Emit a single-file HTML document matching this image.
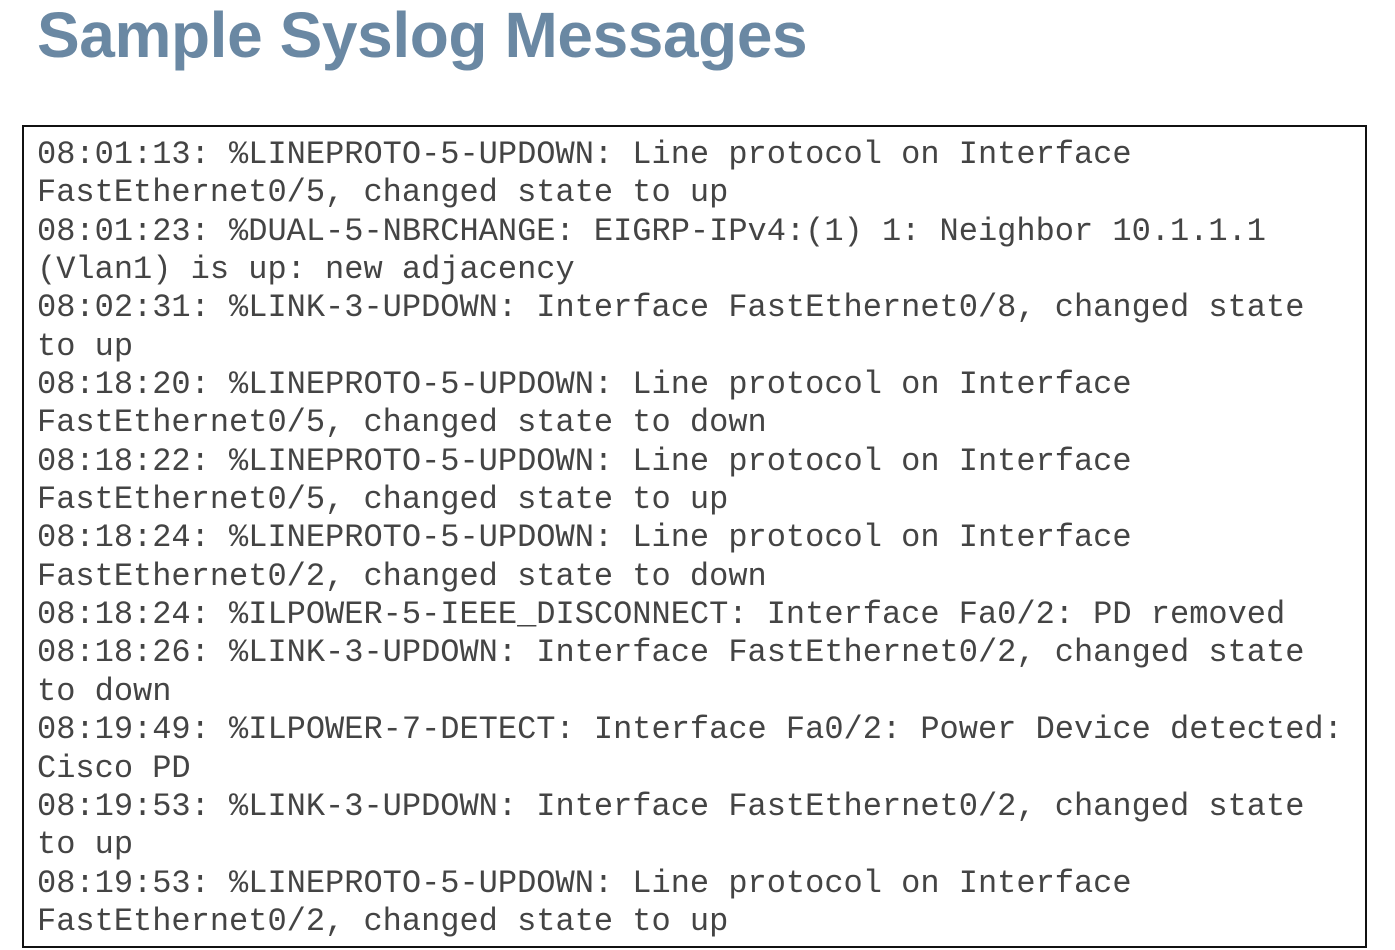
<!DOCTYPE html>
<html><head><meta charset="utf-8"><style>
html,body{margin:0;padding:0;background:#fff;width:1395px;height:950px;overflow:hidden}
h1{position:absolute;left:37px;top:-2px;margin:0;font:bold 64px "Liberation Sans",sans-serif;color:#6a88a3;letter-spacing:-0.4px;white-space:nowrap}
.box{position:absolute;left:22px;top:125px;width:1341px;height:819px;border:2.5px solid #111;}
pre{position:absolute;left:37px;top:136px;margin:0;font:32px/38.35px "Liberation Mono",monospace;color:#444;}
</style></head><body>
<h1>Sample Syslog Messages</h1>
<div class="box"></div>
<pre>08:01:13: %LINEPROTO-5-UPDOWN: Line protocol on Interface
FastEthernet0/5, changed state to up
08:01:23: %DUAL-5-NBRCHANGE: EIGRP-IPv4:(1) 1: Neighbor 10.1.1.1
(Vlan1) is up: new adjacency
08:02:31: %LINK-3-UPDOWN: Interface FastEthernet0/8, changed state
to up
08:18:20: %LINEPROTO-5-UPDOWN: Line protocol on Interface
FastEthernet0/5, changed state to down
08:18:22: %LINEPROTO-5-UPDOWN: Line protocol on Interface
FastEthernet0/5, changed state to up
08:18:24: %LINEPROTO-5-UPDOWN: Line protocol on Interface
FastEthernet0/2, changed state to down
08:18:24: %ILPOWER-5-IEEE_DISCONNECT: Interface Fa0/2: PD removed
08:18:26: %LINK-3-UPDOWN: Interface FastEthernet0/2, changed state
to down
08:19:49: %ILPOWER-7-DETECT: Interface Fa0/2: Power Device detected:
Cisco PD
08:19:53: %LINK-3-UPDOWN: Interface FastEthernet0/2, changed state
to up
08:19:53: %LINEPROTO-5-UPDOWN: Line protocol on Interface
FastEthernet0/2, changed state to up</pre>
</body></html>
